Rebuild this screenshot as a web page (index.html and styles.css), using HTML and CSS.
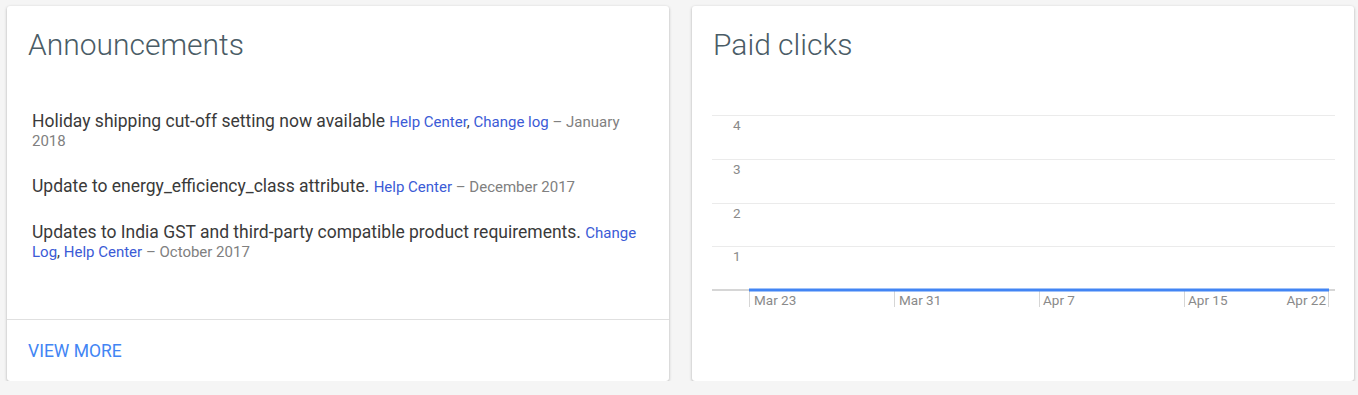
FILE: index.html
```html
<!DOCTYPE html>
<html lang="en">
<head>
<meta charset="UTF-8" />
<meta name="viewport" content="width=device-width, initial-scale=1" />
<title>Merchant Center - Overview</title>
<link rel="stylesheet" href="styles.css">
</head>
<body>

<div class="cards">

  <div class="card">
    <h2 class="card-title">Announcements</h2>
    <div class="card-body">
      <ul class="news">
        <li>
          Holiday shipping cut-off setting now available
          <span class="small"><a href="#">Help Center</a>, <a href="#">Change log</a> <span class="date">– January 2018</span></span>
        </li>
        <li>
          Update to energy_efficiency_class attribute.
          <span class="small"><a href="#">Help Center</a> <span class="date">– December 2017</span></span>
        </li>
        <li>
          Updates to India GST and third-party compatible product requirements.
          <span class="small"><a href="#">Change Log</a>, <a href="#">Help Center</a> <span class="date">– October 2017</span></span>
        </li>
      </ul>
    </div>
    <div class="card-footer">
      <a href="#" class="more">View more</a>
    </div>
  </div>

  <div class="card">
    <h2 class="card-title">Paid clicks</h2>
    <div class="chart">
      <svg width="623" height="210" viewBox="0 0 623 210">
        <!-- grid -->
        <g stroke="#ebebeb" stroke-width="1">
          <line x1="0" y1="10.5" x2="623" y2="10.5" />
          <line x1="0" y1="54.5" x2="623" y2="54.5" />
          <line x1="0" y1="98.5" x2="623" y2="98.5" />
          <line x1="0" y1="141.5" x2="623" y2="141.5" />
        </g>
        <g font-size="13.5" fill="#8a8a8a">
          <text x="21" y="25">4</text>
          <text x="21" y="69">3</text>
          <text x="21" y="113">2</text>
          <text x="21" y="156">1</text>
        </g>
        <!-- axis + ticks -->
        <line x1="0" y1="185" x2="623" y2="185" stroke="#d6d6d6" stroke-width="2" />
        <g stroke="#d6d6d6" stroke-width="1">
          <line x1="37.5" y1="185" x2="37.5" y2="202" />
          <line x1="182.5" y1="185" x2="182.5" y2="202" />
          <line x1="327.5" y1="185" x2="327.5" y2="202" />
          <line x1="472.5" y1="185" x2="472.5" y2="202" />
          <line x1="616.5" y1="185" x2="616.5" y2="202" />
        </g>
        <line x1="37" y1="185" x2="617" y2="185" stroke="#4285f4" stroke-width="3" />
        <g font-size="13.5" fill="#8a8a8a">
          <text x="42" y="200">Mar 23</text>
          <text x="187" y="200">Mar 31</text>
          <text x="331" y="200">Apr 7</text>
          <text x="476" y="200">Apr 15</text>
          <text x="614" y="200" text-anchor="end">Apr 22</text>
        </g>
      </svg>
    </div>
  </div>

</div>

</body>
</html>
```

FILE: styles.css
```css
body {
  font-family: Roboto, "Liberation Sans", Arial, sans-serif;
  background: #f5f5f5;
  color: #333;
  margin: 0;
  padding: 6px 4px 0 7px;
}
.cards {
  display: grid;
  grid-template-columns: 1fr 1fr;
  gap: 23px;
}
.card {
  background: #fff;
  border-radius: 3px;
  box-shadow: 0 1px 3px rgba(0,0,0,0.3);
  height: 375px;
  display: flex;
  flex-direction: column;
}
.card-title {
  margin: 0;
  padding: 19px 21px 0;
  font-size: 30px;
  font-weight: 300;
  line-height: 40px;
  color: #4a5c66;
}
.card-body {
  flex: 1;
  padding: 47px 25px 0;
}
.news {
  list-style: none;
  margin: 0;
  padding: 0;
}
.news li {
  font-size: 17.5px;
  line-height: 19px;
  margin-bottom: 27px;
  color: #3a3a3a;
}
.small {
  font-size: 15px;
  line-height: 1;
}
.news a {
  color: #3b5bd6;
  text-decoration: none;
}
.date {
  color: #808080;
}
.card-footer {
  border-top: 1px solid #e0e0e0;
  padding: 21px 21px 20px;
}
.more {
  font-size: 17.5px;
  line-height: 20px;
  color: #4285f4;
  text-decoration: none;
  text-transform: uppercase;
}
.chart {
  padding: 40px 0 0 20px;
}
.chart svg {
  display: block;
  font-family: Roboto, "Liberation Sans", Arial, sans-serif;
}
```
